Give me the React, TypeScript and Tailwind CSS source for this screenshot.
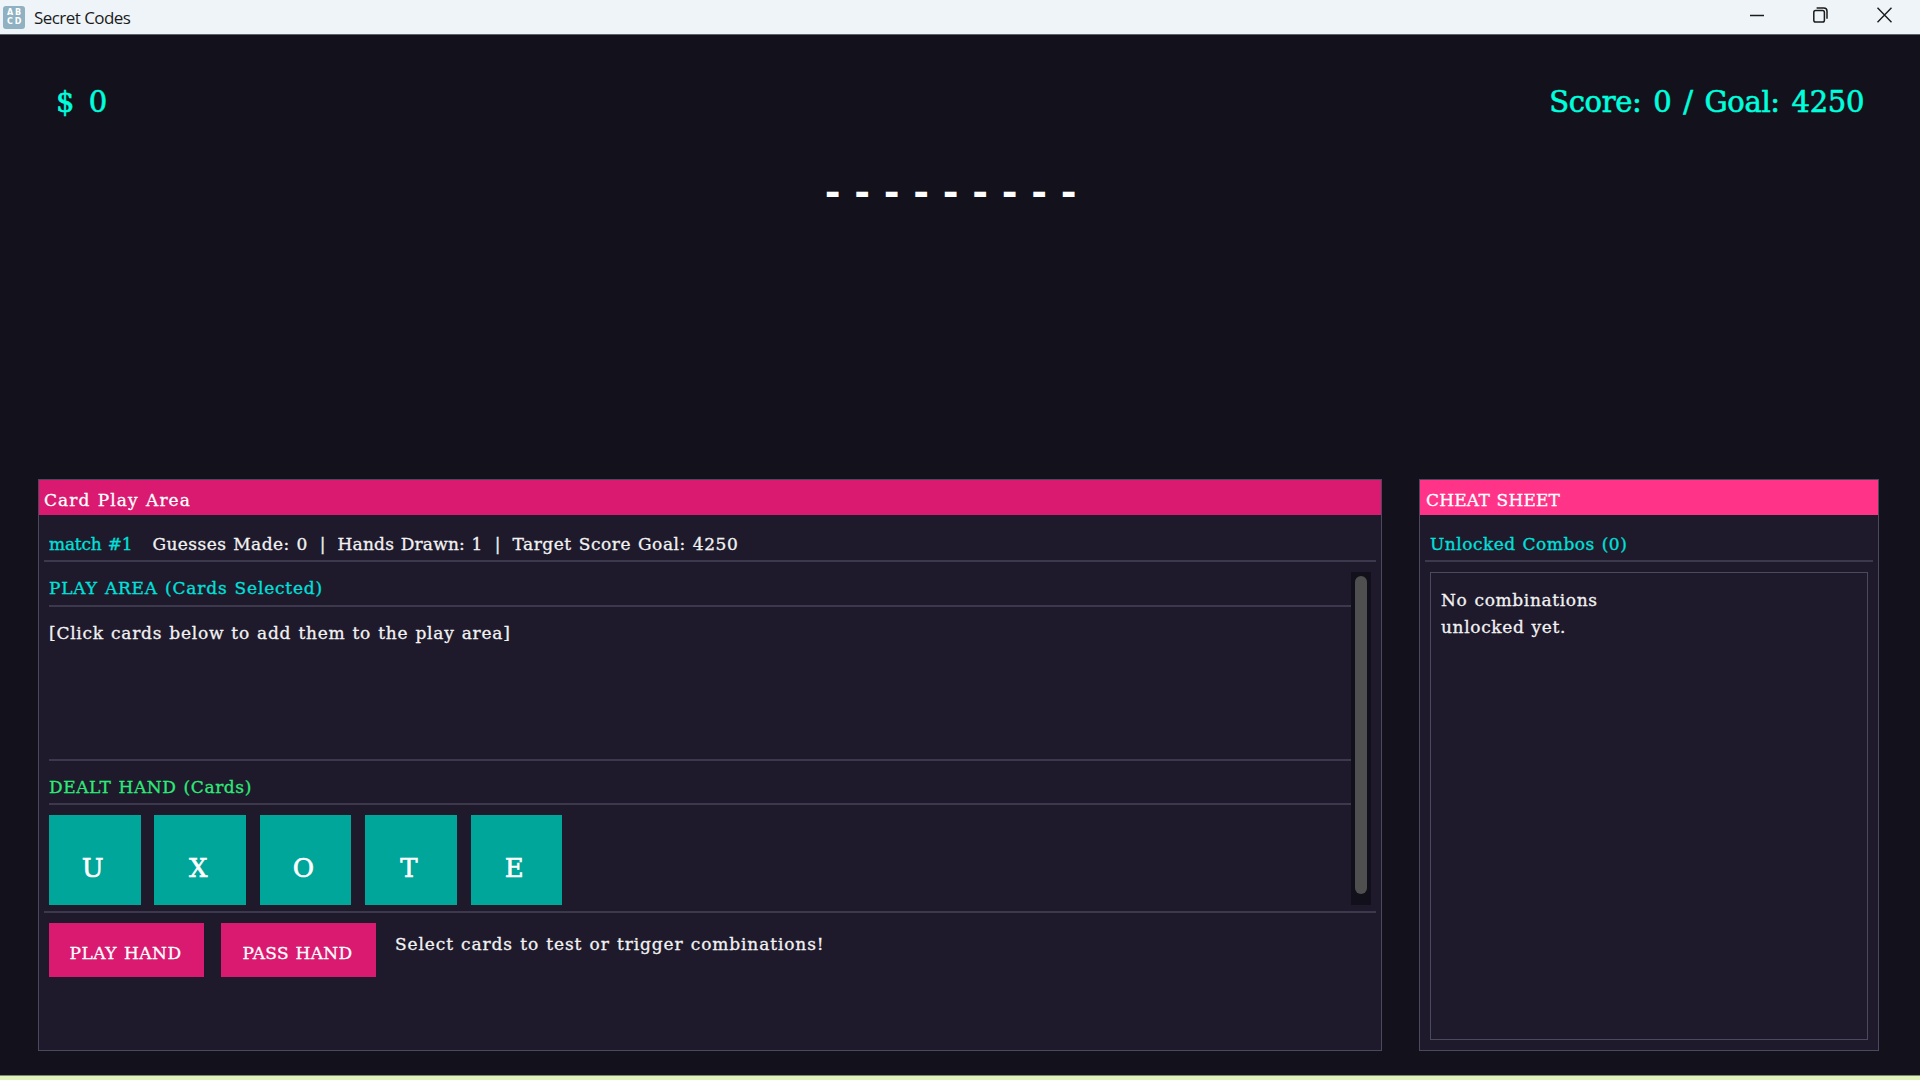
import type { ReactNode } from "react";
import clsx from "clsx";

const hand = ["U", "X", "O", "T", "E"];
const codeLength = 9;

const serif = "font-['DejaVu_Serif','Liberation_Serif',serif]";

function Divider({ className }: { className?: string }) {
  return <div className={clsx("h-[2px] shrink-0 bg-[#3b394b]", className)} />;
}

function Label({ className, children }: { className?: string; children: ReactNode }) {
  return (
    <p
      className={clsx(
        "text-[17px] leading-[26px] whitespace-pre [word-spacing:1px] [-webkit-text-stroke:0.3px]",
        className
      )}
    >
      {children}
    </p>
  );
}

function TitleBar() {
  return (
    <header className="flex h-[35px] shrink-0 items-center border-b border-[#5b636b] bg-[#eff4f9] pl-[3px]">
      <div className="grid h-[23px] w-[22px] grid-cols-2 place-items-center rounded-[3px] bg-[#8fb1c1] px-[3px] py-[2px] font-['DejaVu_Sans',sans-serif] text-[8px] leading-[9px] font-bold text-white">
        <span>A</span>
        <span>B</span>
        <span>C</span>
        <span>D</span>
      </div>
      <h1 className="ml-[9px] pt-px font-['Open_Sans',sans-serif] text-[17px] leading-[34px] tracking-[-0.55px] text-[#1b1b1b]">
        Secret Codes
      </h1>
      <div className="mr-[28px] mb-[4px] ml-auto flex items-center gap-[49px] text-[#1b1b1b]">
        <svg width="14" height="16" viewBox="0 0 14 16" fill="none" stroke="currentColor" strokeWidth="1.5">
          <path d="M0 8.5h14" />
        </svg>
        <svg width="15" height="16" viewBox="0 0 15 16" fill="none" stroke="currentColor" strokeWidth="1.5">
          <rect x="0.8" y="3.6" width="10.6" height="11.4" rx="1.8" />
          <path d="M3.6 1h7.2a3.2 3.2 0 0 1 3.2 3.2v7.6" />
        </svg>
        <svg width="15" height="16" viewBox="0 0 15 16" fill="none" stroke="currentColor" strokeWidth="1.4">
          <path d="M0.5 0.8l14 14.4M14.5 0.8l-14 14.4" />
        </svg>
      </div>
    </header>
  );
}

function PlayArea() {
  return (
    <section className="flex w-[1344px] flex-col border border-[#4b495d] bg-[#1e1a2c]">
      <div className="h-[35px] shrink-0 bg-[#da1a70] pt-[7px] pl-[5px]">
        <Label className="tracking-[1.05px] text-white">Card Play Area</Label>
      </div>

      <div className="flex h-[45px] shrink-0 items-center pt-[13px] pl-[10px]">
        <Label className="tracking-[-0.2px] text-[#00e0dc]">match #1</Label>
        <div className="ml-[20px] flex gap-[12px] text-[#f2f2f2]">
          <Label className="tracking-[0.45px]">Guesses Made: 0</Label>
          <Label>|</Label>
          <Label className="tracking-[0.2px]">Hands Drawn: 1</Label>
          <Label>|</Label>
          <Label className="tracking-[0.55px]">Target Score Goal: 4250</Label>
        </div>
      </div>
      <Divider className="mx-[5px]" />

      <div className="mt-[10px] flex h-[333px] shrink-0 px-[10px]">
        <div className="flex flex-1 flex-col">
          <Label className="mt-[3px] tracking-[0.8px] text-[#00e0dc]">PLAY AREA (Cards Selected)</Label>
          <Divider className="mt-[4px]" />
          <Label className="mt-[13px] tracking-[0.75px] text-[#f2f2f2]">
            [Click cards below to add them to the play area]
          </Label>
          <Divider className="mt-[113px]" />
          <Label className="mt-[13px] tracking-[0.6px] text-[#2eea78]">DEALT HAND (Cards)</Label>
          <Divider className="mt-[3px]" />
          <div className="mt-auto flex gap-[13.9px]">
            {hand.map((letter) => (
              <button
                key={letter}
                className="h-[90px] w-[91.5px] bg-[#00a69a] pt-[16px] pr-[4px] text-[26px] leading-[30px] text-white [-webkit-text-stroke:0.6px]"
              >
                {letter}
              </button>
            ))}
          </div>
        </div>
        <div className="h-full w-[20px] bg-[#12101a] px-[4px] pt-[4px]">
          <div className="h-[318px] rounded-full bg-[#4f4f4f]" />
        </div>
      </div>

      <Divider className="mx-[5px] mt-[6px]" />
      <div className="flex pt-[10px] pl-[10px]">
        <button className="flex h-[54px] w-[155px] items-center justify-center bg-[#da1a70] pt-[6px] pr-[2px]">
          <Label className="tracking-[0.5px] text-white">PLAY HAND</Label>
        </button>
        <button className="ml-[17px] flex h-[54px] w-[155px] items-center justify-center bg-[#da1a70] pt-[6px] pr-[2px]">
          <Label className="tracking-[0.3px] text-white">PASS HAND</Label>
        </button>
        <Label className="mt-[8px] ml-[19px] tracking-[0.88px] text-[#f2f2f2]">
          Select cards to test or trigger combinations!
        </Label>
      </div>
    </section>
  );
}

function CheatSheet() {
  return (
    <section className="flex w-[460px] flex-col border border-[#4b495d] bg-[#1e1a2c]">
      <div className="h-[35px] shrink-0 bg-[#ff3388] pt-[7px] pl-[6px]">
        <Label className="tracking-[0.2px] text-white">CHEAT SHEET</Label>
      </div>
      <div className="h-[45px] shrink-0 pt-[16px] pl-[10px]">
        <Label className="tracking-[0.5px] text-[#00e0dc]">Unlocked Combos (0)</Label>
      </div>
      <Divider className="mx-[5px]" />
      <div className="mx-[10px] mt-[10px] mb-[10px] flex-1 border border-[#4b495d] pt-[14px] pl-[10px] text-[#f2f2f2]">
        <Label className="tracking-[0.65px]">No combinations</Label>
        <Label className="mt-px tracking-[0.65px]">unlocked yet.</Label>
      </div>
    </section>
  );
}

export default function App() {
  return (
    <div className={clsx("flex h-[1080px] w-[1920px] flex-col overflow-hidden bg-[#13111b]", serif)}>
      <TitleBar />

      <main className="flex flex-1 flex-col">
        <div className="flex justify-between pt-[45px] pr-[56px] pl-[56px] text-[29px] leading-[44px] text-[#00ffdd] [-webkit-text-stroke:0.6px]">
          <p className="[word-spacing:5px]">$ 0</p>
          <p className="tracking-[-0.35px] [word-spacing:3px]">Score: 0 / Goal: 4250</p>
        </div>

        {/* Hidden code, one dash per letter */}
        <div className="mt-[46px] ml-[818px] flex h-[44px] font-['DejaVu_Sans',sans-serif] text-[38px] leading-[44px] font-bold text-white">
          {Array.from({ length: codeLength }, (_, i) => (
            <span key={i} className="w-[29.5px] text-center">
              -
            </span>
          ))}
        </div>

        <div className="mt-auto mb-[24px] ml-[38px] flex h-[572px] gap-[37px]">
          <PlayArea />
          <CheatSheet />
        </div>
      </main>

      <div className="h-[5px] shrink-0 border-t border-[#7d8a70] bg-[#e0f3bb]" />
    </div>
  );
}
